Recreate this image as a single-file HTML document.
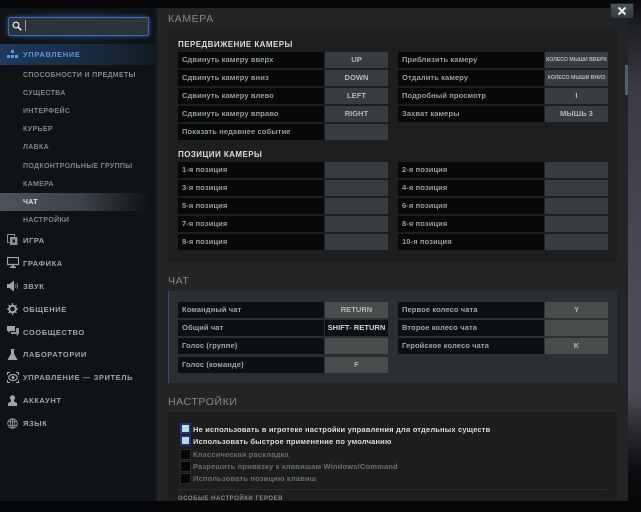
<!DOCTYPE html>
<html><head><meta charset="utf-8"><style>
html,body{margin:0;padding:0;background:#050608;width:641px;height:512px;overflow:hidden}
#r{position:relative;width:641px;height:512px;overflow:hidden;font-family:"Liberation Sans",sans-serif}
#r div,#r svg{position:absolute}
.t{white-space:nowrap;line-height:12px;height:12px}
.l{height:16px;width:146px;background:#06080a;color:#9a9e9e;font-size:7.5px;font-weight:bold;letter-spacing:.12px;line-height:15px;text-indent:4px;white-space:nowrap;overflow:hidden}
.k{height:16px;width:63px;background:#3a3d3f;color:#b4b8b8;font-size:7.5px;font-weight:bold;letter-spacing:.05px;line-height:16px;text-align:center;white-space:nowrap;overflow:hidden}
.c .l{background:#0d1012;color:#a0a5a5}
.c .k{background:#484d4d}
.h{font-size:10.5px;color:#85898b;letter-spacing:.6px}
.s{font-size:8px;font-weight:bold;color:#dcdcdc;letter-spacing:.44px}
.a{left:23px;font-size:7px;font-weight:bold;color:#7f8589;letter-spacing:.33px}
.m{left:23px;font-size:7.5px;font-weight:bold;color:#a0a5a8;letter-spacing:.6px}
.b{left:181px;width:9px;height:9px;background:#050506;box-shadow:0 0 0 1px #2a2b2c}
.on{background:#b6dcdc;box-shadow:0 0 0 2px #26307a;width:7px;height:7px;left:182px}
.x{left:193px;font-size:7.5px;font-weight:bold;letter-spacing:.18px;color:#6a6e70}
.y{color:#dcdedf}
.w{font-size:5.2px;letter-spacing:0}
</style></head><body><div id="r">
<div style="left:628px;top:0;width:13px;height:512px;background:linear-gradient(180deg,#0b0b0d 0,#1e1f24 25px,#3a3b44 90px,#4a4b56 300px,#4a4b55 395px,#2a2b30 430px,#0c0d10 470px,#060608 512px)"></div>
<div style="left:0;top:8px;width:156px;height:493px;background:#101316"></div>
<div style="left:156px;top:8px;width:2px;height:493px;background:#1a1c1f"></div>
<div style="left:158px;top:8px;width:470px;height:493px;background:#232425"></div>

<div style="left:1px;top:9px;width:154px;height:36px;background:radial-gradient(ellipse at center,rgba(50,95,160,.35),rgba(30,50,80,0) 75%)"></div>
<div style="left:8px;top:17px;width:139px;height:17px;background:#2d333a;border:1px solid #3c6db0;border-radius:2px;box-shadow:0 0 4px #2a5ea8"></div>
<svg style="left:12px;top:21px" width="10" height="10" viewBox="0 0 10 10"><circle cx="4" cy="4" r="2.9" fill="none" stroke="#e4e6e8" stroke-width="1.3"/><path d="M6.2 6.2L9.3 9.3" stroke="#e4e6e8" stroke-width="1.7"/></svg>
<div style="left:25px;top:20px;width:1px;height:11px;background:#9aa2aa"></div>

<div style="left:0;top:44px;width:156px;height:21px;background:linear-gradient(90deg,#1f3a5c,#172738 70%,#131a22)"></div>
<svg style="left:7px;top:50px" width="11" height="9" viewBox="0 0 11 9"><path d="M4 0h3v3H4zM0 5h3v3H0zM4 5h3v3H4zM8 5h3v3H8z" fill="#5e97e2"/></svg>
<div class="t" style="left:23px;top:49px;font-size:7.5px;font-weight:bold;color:#5c94e2;letter-spacing:.64px">УПРАВЛЕНИЕ</div>
<div class="t a" style="top:70px">СПОСОБНОСТИ И ПРЕДМЕТЫ</div>
<div class="t a" style="top:88px">СУЩЕСТВА</div>
<div class="t a" style="top:106px">ИНТЕРФЕЙС</div>
<div class="t a" style="top:124px">КУРЬЕР</div>
<div class="t a" style="top:142px">ЛАВКА</div>
<div class="t a" style="top:161px">ПОДКОНТРОЛЬНЫЕ ГРУППЫ</div>
<div class="t a" style="top:179px">КАМЕРА</div>
<div style="left:0;top:193px;width:148px;height:18px;background:linear-gradient(90deg,#4a545b,#3b4349 55%,rgba(40,46,50,0))"></div>
<div class="t a" style="top:197px;color:#e4e6e6">ЧАТ</div>
<div class="t a" style="top:215px">НАСТРОЙКИ</div>

<svg style="left:7px;top:234px" width="11" height="12" viewBox="0 0 11 12"><path d="M.5 .5h7v2M.5 .5v8h2" fill="none" stroke="#8d9295"/><rect x="3" y="3" width="7.5" height="8" fill="#8d9295"/><rect x="5.5" y="5.5" width="2.5" height="3" fill="#101316"/></svg>
<div class="t m" style="top:235px">ИГРА</div>
<svg style="left:7px;top:257px" width="12" height="11" viewBox="0 0 12 11"><path d="M.5 .5h11v7H.5z" fill="none" stroke="#a0a5a8" stroke-width="1.2"/><path d="M5 8h2v1.5h2V11H3V9.500h2z" fill="#a0a5a8"/></svg>
<div class="t m" style="top:258px">ГРАФИКА</div>
<svg style="left:7px;top:280px" width="12" height="12" viewBox="0 0 12 12"><path d="M0 4h2.500L7 .5v11L2.500 8H0z" fill="#a0a5a8"/><path d="M8.500 4q1 2 0 4M10 3q1.500 3 0 6" fill="none" stroke="#8d9295" stroke-width=".8"/></svg>
<div class="t m" style="top:281px">ЗВУК</div>
<svg style="left:7px;top:303px" width="11" height="12" viewBox="0 0 11 12"><circle cx="5.500" cy="6" r="3.300" fill="none" stroke="#a0a5a8" stroke-width="2"/><path d="M5.500 0v2M5.500 10v2M0 6h2M9 6h2M1.500 2l1.500 1.500M8 8.500l1.500 1.500M9.500 2L8 3.500M3 8.500L1.500 10" stroke="#a0a5a8" stroke-width="1.200"/></svg>
<div class="t m" style="top:304px">ОБЩЕНИЕ</div>
<svg style="left:7px;top:326px" width="12" height="11" viewBox="0 0 12 11"><path d="M0 0h8v5H3.500L1.500 7V5H0z" fill="#a0a5a8"/><path d="M4 6h5V2h3v6h-1v2L9 8H4z" fill="#8d9295"/></svg>
<div class="t m" style="top:327px">СООБЩЕСТВО</div>
<svg style="left:7px;top:349px" width="11" height="11" viewBox="0 0 11 11"><path d="M3.500 0h4v1H7v3.500L10.500 11H.5L4 4.500V1h-.5z" fill="#a0a5a8"/></svg>
<div class="t m" style="top:349px">ЛАБОРАТОРИИ</div>
<svg style="left:7px;top:372px" width="12" height="11" viewBox="0 0 12 11"><path d="M.5 3V.5H3M9 .5h2.500V3M11.500 8v2.500H9M3 10.500H.5V8" fill="none" stroke="#a0a5a8"/><ellipse cx="6" cy="5.500" rx="4.300" ry="3" fill="none" stroke="#a0a5a8" stroke-width="1.200"/><circle cx="6" cy="5.500" r="1.500" fill="#a0a5a8"/></svg>
<div class="t m" style="top:372px">УПРАВЛЕНИЕ — ЗРИТЕЛЬ</div>
<svg style="left:8px;top:395px" width="9" height="11" viewBox="0 0 9 11"><circle cx="4.500" cy="2.800" r="2.600" fill="#a0a5a8"/><path d="M3 5h3v1.500L9 8v3H0V8l3-1.500z" fill="#a0a5a8"/></svg>
<div class="t m" style="top:395px">АККАУНТ</div>
<svg style="left:7px;top:418px" width="11" height="11" viewBox="0 0 11 11"><g fill="none" stroke="#8d9295" stroke-width=".9"><circle cx="5.500" cy="5.500" r="4.800"/><ellipse cx="5.500" cy="5.500" rx="2.200" ry="4.800"/><path d="M1 3.700h9M1 7.300h9M5.500 .7v9.600"/></g></svg>
<div class="t m" style="top:418px">ЯЗЫК</div>

<div style="left:625px;top:65px;width:3px;height:30px;background:#4b6466"></div>
<div style="left:610px;top:3px;width:24px;height:16px;background:linear-gradient(180deg,#46545a,#313c41);border:1px solid #1b2022;box-sizing:border-box"></div>
<svg style="left:617px;top:6px" width="10" height="10" viewBox="0 0 10 10"><path d="M1.500 1.500l7 7M8.500 1.500l-7 7" stroke="#eceeee" stroke-width="2"/></svg>

<div class="t h" style="left:168px;top:13px">КАМЕРА</div>
<div style="left:168px;top:29px;width:449px;height:233px;background:#1d1e1f"></div>
<div class="t s" style="left:178px;top:39px">ПЕРЕДВИЖЕНИЕ КАМЕРЫ</div>
<div class="l" style="left:178px;top:52px">Сдвинуть камеру вверх</div><div class="k" style="left:325px;top:52px">UP</div>
<div class="l" style="left:398px;top:52px">Приблизить камеру</div><div class="k w" style="left:545px;top:52px">КОЛЕСО МЫШИ ВВЕРХ</div>
<div class="l" style="left:178px;top:70px">Сдвинуть камеру вниз</div><div class="k" style="left:325px;top:70px">DOWN</div>
<div class="l" style="left:398px;top:70px">Отдалить камеру</div><div class="k w" style="left:545px;top:70px">КОЛЕСО МЫШИ ВНИЗ</div>
<div class="l" style="left:178px;top:88px">Сдвинуть камеру влево</div><div class="k" style="left:325px;top:88px">LEFT</div>
<div class="l" style="left:398px;top:88px">Подробный просмотр</div><div class="k" style="left:545px;top:88px">I</div>
<div class="l" style="left:178px;top:106px">Сдвинуть камеру вправо</div><div class="k" style="left:325px;top:106px">RIGHT</div>
<div class="l" style="left:398px;top:106px">Захват камеры</div><div class="k" style="left:545px;top:106px">МЫШЬ 3</div>
<div class="l" style="left:178px;top:124px">Показать недавнее событие</div><div class="k" style="left:325px;top:124px"></div>

<div class="t s" style="left:178px;top:149px">ПОЗИЦИИ КАМЕРЫ</div>
<div class="l" style="left:178px;top:162px">1-я позиция</div><div class="k" style="left:325px;top:162px"></div>
<div class="l" style="left:398px;top:162px">2-я позиция</div><div class="k" style="left:545px;top:162px"></div>
<div class="l" style="left:178px;top:180px">3-я позиция</div><div class="k" style="left:325px;top:180px"></div>
<div class="l" style="left:398px;top:180px">4-я позиция</div><div class="k" style="left:545px;top:180px"></div>
<div class="l" style="left:178px;top:198px">5-я позиция</div><div class="k" style="left:325px;top:198px"></div>
<div class="l" style="left:398px;top:198px">6-я позиция</div><div class="k" style="left:545px;top:198px"></div>
<div class="l" style="left:178px;top:216px">7-я позиция</div><div class="k" style="left:325px;top:216px"></div>
<div class="l" style="left:398px;top:216px">8-я позиция</div><div class="k" style="left:545px;top:216px"></div>
<div class="l" style="left:178px;top:234px">9-я позиция</div><div class="k" style="left:325px;top:234px"></div>
<div class="l" style="left:398px;top:234px">10-я позиция</div><div class="k" style="left:545px;top:234px"></div>

<div class="t h" style="left:168px;top:275px">ЧАТ</div>
<div style="left:168px;top:291px;width:449px;height:92px;background:#2b2f31"></div>
<div style="left:168px;top:291px;width:1px;height:92px;background:#2f4f86"></div>
<div class="c" style="left:0;top:0">
<div class="l" style="left:178px;top:302px">Командный чат</div><div class="k" style="left:325px;top:302px">RETURN</div>
<div class="l" style="left:398px;top:302px">Первое колесо чата</div><div class="k" style="left:545px;top:302px">Y</div>
<div class="l" style="left:178px;top:320px">Общий чат</div><div class="k" style="left:325px;top:320px;background:#0d1012;color:#d4d6d6">SHIFT- RETURN</div>
<div class="l" style="left:398px;top:320px">Второе колесо чата</div><div class="k" style="left:545px;top:320px"></div>
<div class="l" style="left:178px;top:338px">Голос (группе)</div><div class="k" style="left:325px;top:338px"></div>
<div class="l" style="left:398px;top:338px">Геройское колесо чата</div><div class="k" style="left:545px;top:338px">K</div>
<div class="l" style="left:178px;top:357px">Голос (команде)</div><div class="k" style="left:325px;top:357px">F</div>
</div>

<div class="t h" style="left:168px;top:396px">НАСТРОЙКИ</div>
<div style="left:168px;top:412px;width:449px;height:89px;background:#1c1d1e"></div>
<div class="on" style="position:absolute;top:425px"></div><div class="t x y" style="top:424px">Не использовать в игротеке настройки управления для отдельных существ</div>
<div class="on" style="position:absolute;top:437px"></div><div class="t x y" style="top:436px">Использовать быстрое применение по умолчанию</div>
<div class="b" style="top:450px"></div><div class="t x" style="top:449px">Классическая раскладка</div>
<div class="b" style="top:462px"></div><div class="t x" style="top:461px">Разрешить привязку к клавишам Windows/Command</div>
<div class="b" style="top:474px"></div><div class="t x" style="top:473px">Использовать позицию клавиш</div>
<div style="left:178px;top:489px;width:429px;height:1px;background:#2b2c2d"></div>
<div style="left:178px;top:493px;width:200px;height:8px;overflow:hidden"><div class="t" style="left:0;top:0;font-size:6px;font-weight:bold;color:#85898b;letter-spacing:.54px">ОСОБЫЕ НАСТРОЙКИ ГЕРОЕВ</div></div>
</div></body></html>
